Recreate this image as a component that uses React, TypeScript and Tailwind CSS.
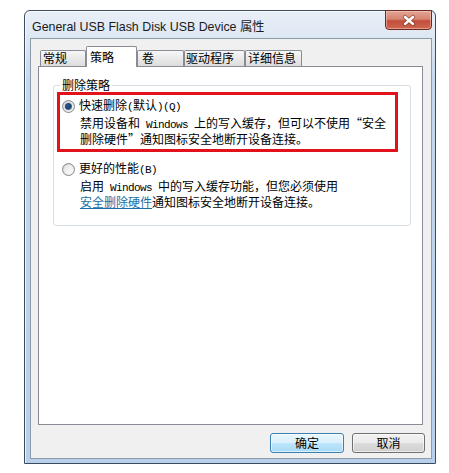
import React from "react";

function Radio({ checked }: { checked: boolean }) {
  return (
    <div className="w-[13px] h-[13px] shrink-0 rounded-full border border-[#8a8a8a] bg-[linear-gradient(135deg,#cfcfcf,#f6f6f6)] flex items-center justify-center">
      {checked ? (
        <div className="w-[7px] h-[7px] rounded-full bg-[radial-gradient(circle_at_40%_40%,#2c5f93_0%,#1b3f6e_45%,#7fb6e0_100%)]" />
      ) : (
        <div className="w-[9px] h-[9px] rounded-full bg-[linear-gradient(135deg,#e2e2e2,#ffffff)]" />
      )}
    </div>
  );
}

function M({ children }: { children: React.ReactNode }) {
  return (
    <span className="font-['Liberation_Mono',monospace] text-[11px] tracking-[-0.6px] whitespace-pre">
      {children}
    </span>
  );
}

export default function App() {
  return (
    <div
      lang="zh-CN"
      className="w-[449px] h-[473px] bg-white pt-[10px] pl-[24px] font-['Noto_Sans_CJK_SC',sans-serif] text-[12px] text-black"
    >
      <div className="w-[412px] h-[454px] flex flex-col border border-[#3b4c60] rounded-t-[6px] bg-[linear-gradient(180deg,#e9eff7_0px,#dde7f3_27px,#c4d8ee_70px,#b8cfe9_100%)] pl-[5px] pr-[3px] pb-[4px] shadow-[inset_1px_1px_0_rgba(255,255,255,0.7)]">
        {/* Title bar */}
        <div className="h-[27px] flex items-start">
          <span className="self-center mt-[4px] ml-[2px] font-['Liberation_Sans',sans-serif] text-[12.4px] leading-[16px] text-[#1b1b1b]">
            General USB Flash Disk USB Device 属性
          </span>
          <div className="ml-auto -mt-px w-[47px] h-[20px] rounded-b-[4px] border border-[#6b2a20] bg-[linear-gradient(180deg,#e4a594_0%,#d58470_45%,#c24e3a_55%,#cf6650_100%)] shadow-[inset_0_0_0_1px_rgba(255,220,210,0.45)] flex items-center justify-center">
            <svg width="14" height="11" viewBox="0 0 14 11">
              <path d="M3 2 L11 9 M11 2 L3 9" stroke="#5a1a12" strokeWidth="4" strokeLinecap="round" opacity="0.5" />
              <path d="M3 2 L11 9 M11 2 L3 9" stroke="#ffffff" strokeWidth="2.4" strokeLinecap="round" />
            </svg>
          </div>
        </div>

        {/* Client */}
        <div className="flex-1 flex flex-col border border-[#8d9bab] bg-[#f0f0f0] pt-[7px] pl-[7px] pr-[8px] pb-[5px]">
          {/* Tabs */}
          <div className="flex items-end h-[20px] pl-[2px]">
            <div className="w-[46px] h-[16px] border border-b-0 border-[#898c95] rounded-t-[2px] bg-[linear-gradient(180deg,#f7f7f7,#dcdcdc)] pl-[2px] leading-[14px]">
              常规
            </div>
            <div className="relative z-10 -mb-px w-[51px] h-[21px] border border-b-0 border-[#898c95] rounded-t-[2px] bg-white pt-[3px] pl-[3px] leading-[14px]">
              策略
            </div>
            <div className="w-[47px] h-[16px] border border-b-0 border-[#898c95] rounded-t-[2px] bg-[linear-gradient(180deg,#f7f7f7,#dcdcdc)] pl-[4px] leading-[14px]">
              卷
            </div>
            <div className="w-[61px] h-[16px] border border-b-0 border-[#898c95] rounded-t-[2px] bg-[linear-gradient(180deg,#f7f7f7,#dcdcdc)] pl-[1px] leading-[14px]">
              驱动程序
            </div>
            <div className="w-[57px] h-[16px] border border-b-0 border-[#898c95] rounded-t-[2px] bg-[linear-gradient(180deg,#f7f7f7,#dcdcdc)] pl-[2px] leading-[14px]">
              详细信息
            </div>
          </div>

          {/* Panel */}
          <div className="flex-1 flex flex-col border border-[#898c95] bg-white">
            <fieldset className="mt-[11px] ml-[14px] mr-[11px] border border-[#d5dfe5] rounded-[3px] pb-[16px]">
              <legend className="ml-[6px] px-[2px] leading-[14px]">删除策略</legend>

              <div className="ml-[3px] w-[341px] border-[3px] border-[#e1121c] pt-[4px] pl-[2px] pb-[3px]">
                <div className="flex items-center h-[14px] gap-[4px]">
                  <Radio checked />
                  <span className="leading-[14px] whitespace-nowrap">
                    快速删除<M>(</M>默认<M>)(Q)</M>
                  </span>
                </div>
                <div className="mt-[3px] pl-[18px] leading-[14px] whitespace-nowrap">
                  <div>
                    禁用设备和<M> Windows </M>上的写入缓存，但可以不使用“安全
                  </div>
                  <div>删除硬件”通知图标安全地断开设备连接。</div>
                </div>
              </div>

              <div className="mt-[10px] pl-[8px]">
                <div className="flex items-center h-[14px] gap-[4px]">
                  <Radio checked={false} />
                  <span className="leading-[14px] whitespace-nowrap">
                    更好的性能<M>(B)</M>
                  </span>
                </div>
                <div className="mt-[3px] pl-[18px] leading-[14px] whitespace-nowrap">
                  <div>
                    启用<M> Windows </M>中的写入缓存功能，但您必须使用
                  </div>
                  <div>
                    <span className="text-[#1a6fa8] underline">安全删除硬件</span>通知图标安全地断开设备连接。
                  </div>
                </div>
              </div>
            </fieldset>
          </div>

          {/* Buttons */}
          <div className="flex justify-end gap-[8px] mt-[8px] -mr-[2px]">
            <div className="w-[74px] h-[20px] rounded-[3px] border border-[#3c7fb1] bg-[linear-gradient(180deg,#eaf6fd_0%,#d9f0fc_50%,#bee6fd_50%,#a7d9f5_100%)] shadow-[inset_0_0_0_1px_rgba(255,255,255,0.6)] flex items-center justify-center leading-[14px]">
              确定
            </div>
            <div className="w-[73px] h-[20px] rounded-[3px] border border-[#707070] bg-[linear-gradient(180deg,#f2f2f2_0%,#ebebeb_50%,#dddddd_50%,#cfcfcf_100%)] shadow-[inset_0_0_0_1px_rgba(255,255,255,0.6)] flex items-center justify-center leading-[14px]">
              取消
            </div>
          </div>
        </div>
      </div>
    </div>
  );
}
